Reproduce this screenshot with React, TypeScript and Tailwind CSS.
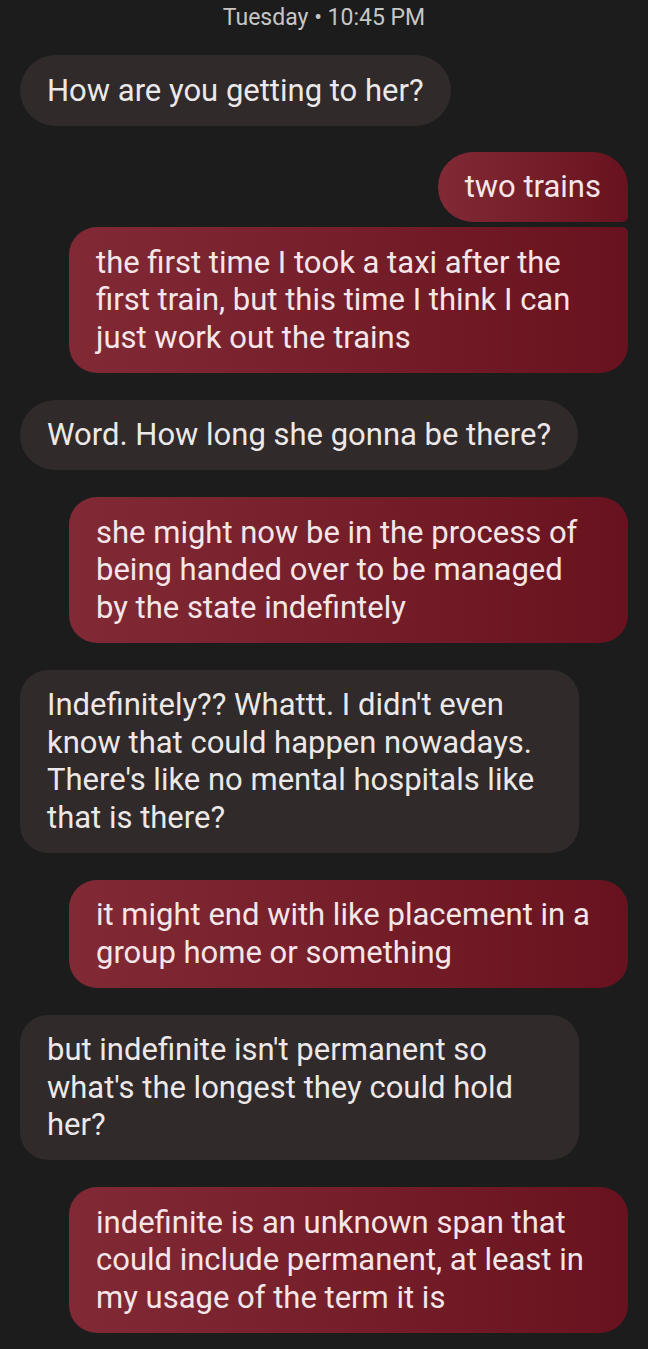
const incoming = "bg-[#302a2a] text-[#ece8e8]";
const outgoing = "bg-linear-to-r from-[#812a36] to-[#69121f] text-[#f4e6e8]";

function Lines({ lines }: { lines: string[] }) {
  return (
    <>
      {lines.map((l, i) => (
        <span key={i} className="block whitespace-nowrap">
          {l}
        </span>
      ))}
    </>
  );
}

export default function App() {
  return (
    <div className="w-[648px] min-h-[1349px] bg-[#1c1c1c] px-5 font-['Roboto',sans-serif] text-[31px] leading-[37.5px]">
      {/* Horodatage */}
      <div className="pt-[5px] text-center text-[23px] leading-[26px] text-[#c6c6c6]">
        Tuesday • 10:45 PM
      </div>

      <div className="mt-[24px] flex flex-col">
        <div className={`self-start rounded-[36px] px-[27px] py-[16.5px] ${incoming}`}>
          How are you getting to her?
        </div>

        <div className="mt-[26px] flex flex-col items-end gap-[5px]">
          <div className={`rounded-[36px] rounded-br-[6px] px-[27px] py-[16.5px] ${outgoing}`}>
            two trains
          </div>
          <div className={`w-[559px] rounded-[28px] rounded-tr-[6px] px-[27px] py-[16.5px] ${outgoing}`}>
            <Lines
              lines={[
                "the first time I took a taxi after the",
                "first train, but this time I think I can",
                "just work out the trains",
              ]}
            />
          </div>
        </div>

        <div className={`mt-[27px] self-start rounded-[36px] px-[27px] py-[16.5px] ${incoming}`}>
          Word. How long she gonna be there?
        </div>

        <div className={`mt-[27px] w-[559px] self-end rounded-[28px] px-[27px] py-[16.5px] ${outgoing}`}>
          <Lines
            lines={[
              "she might now be in the process of",
              "being handed over to be managed",
              "by the state indefintely",
            ]}
          />
        </div>

        <div className={`mt-[27px] w-[559px] self-start rounded-[28px] px-[27px] py-[16.5px] ${incoming}`}>
          <Lines
            lines={[
              "Indefinitely?? Whattt. I didn't even",
              "know that could happen nowadays.",
              "There's like no mental hospitals like",
              "that is there?",
            ]}
          />
        </div>

        <div className={`mt-[27px] w-[559px] self-end rounded-[28px] px-[27px] py-[16.5px] ${outgoing}`}>
          <Lines lines={["it might end with like placement in a", "group home or something"]} />
        </div>

        <div className={`mt-[27px] w-[559px] self-start rounded-[28px] px-[27px] py-[16.5px] ${incoming}`}>
          <Lines
            lines={[
              "but indefinite isn't permanent so",
              "what's the longest they could hold",
              "her?",
            ]}
          />
        </div>

        <div className={`mt-[27px] w-[559px] self-end rounded-[28px] px-[27px] py-[16.5px] ${outgoing}`}>
          <Lines
            lines={[
              "indefinite is an unknown span that",
              "could include permanent, at least in",
              "my usage of the term it is",
            ]}
          />
        </div>
      </div>
    </div>
  );
}
